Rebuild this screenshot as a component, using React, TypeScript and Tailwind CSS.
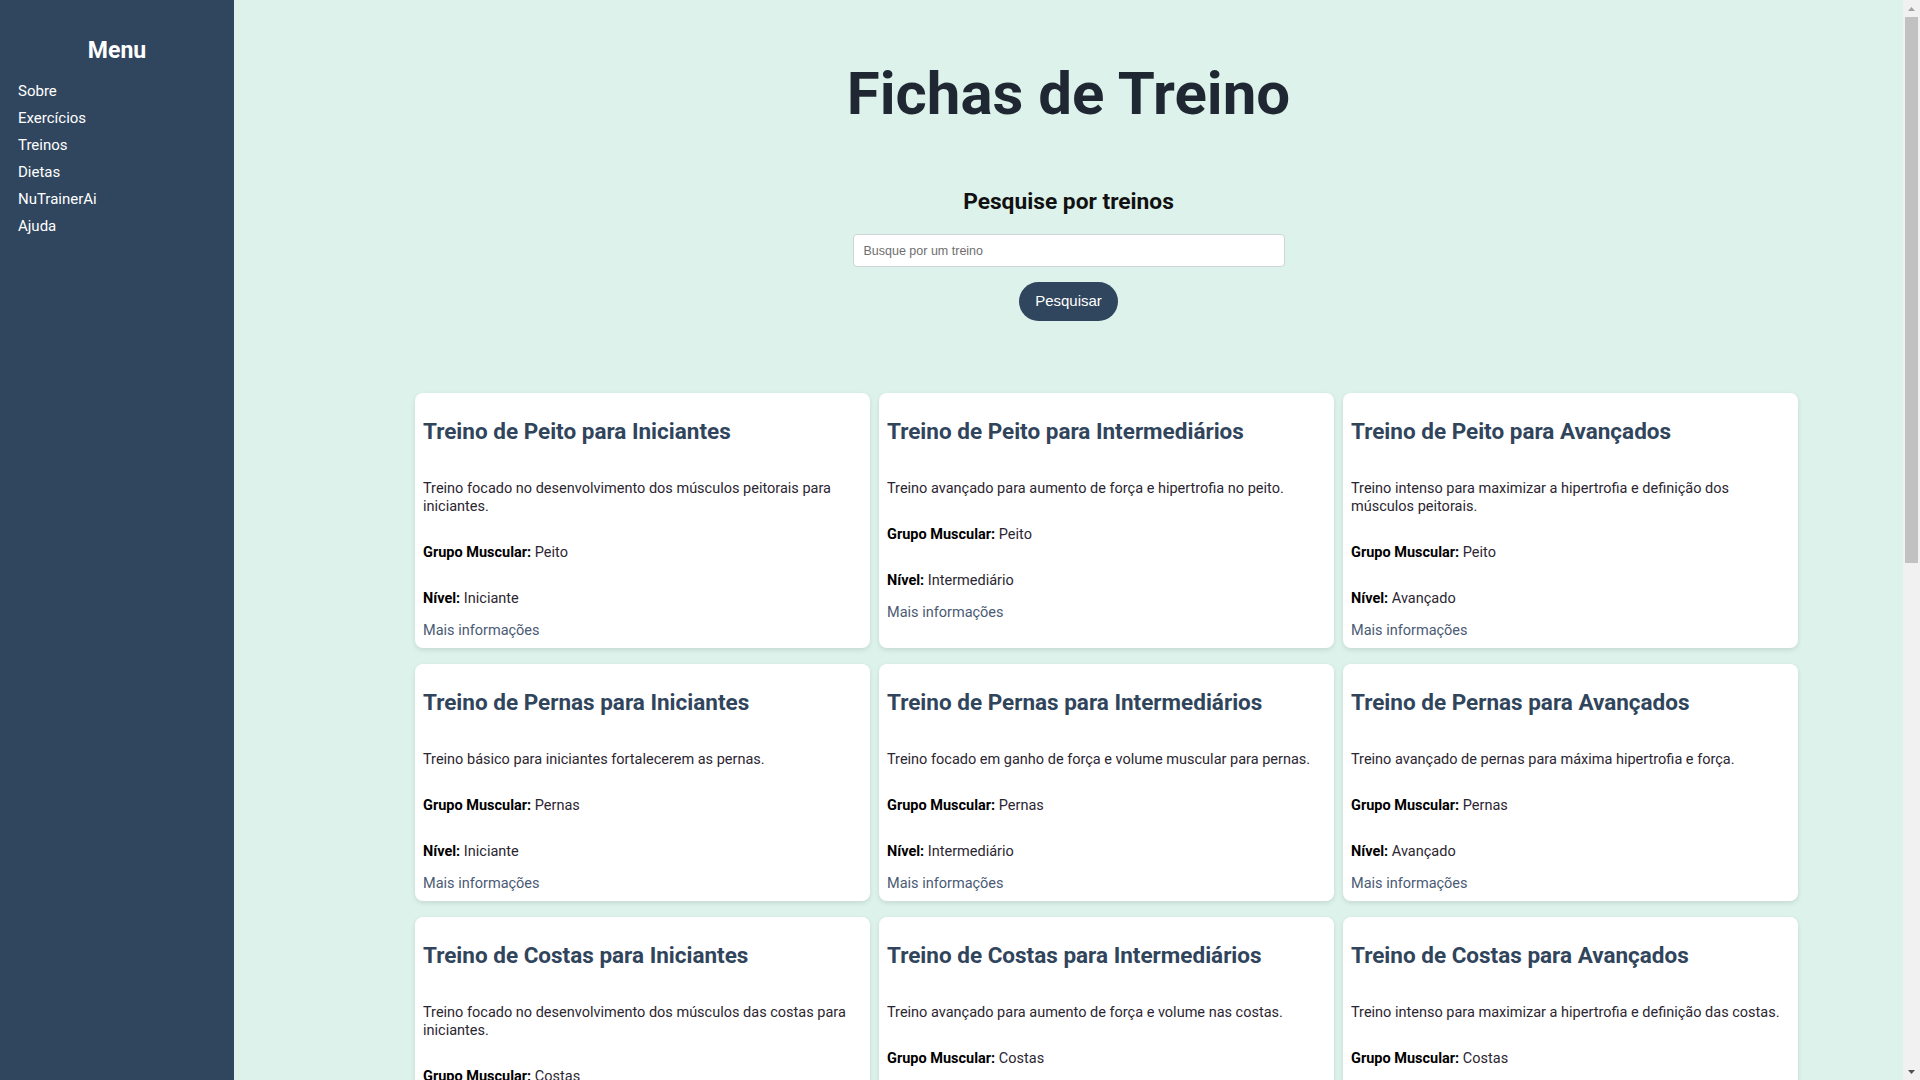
import React from "react";

type Treino = { titulo: string; descricao: string; grupo: string; nivel: string };

const grupos: { nome: string; grupo: string; desc: [string, string, string] }[] = [
  {
    nome: "Peito",
    grupo: "Peito",
    desc: [
      "Treino focado no desenvolvimento dos músculos peitorais para iniciantes.",
      "Treino avançado para aumento de força e hipertrofia no peito.",
      "Treino intenso para maximizar a hipertrofia e definição dos músculos peitorais.",
    ],
  },
  {
    nome: "Pernas",
    grupo: "Pernas",
    desc: [
      "Treino básico para iniciantes fortalecerem as pernas.",
      "Treino focado em ganho de força e volume muscular para pernas.",
      "Treino avançado de pernas para máxima hipertrofia e força.",
    ],
  },
  {
    nome: "Costas",
    grupo: "Costas",
    desc: [
      "Treino focado no desenvolvimento dos músculos das costas para iniciantes.",
      "Treino avançado para aumento de força e volume nas costas.",
      "Treino intenso para maximizar a hipertrofia e definição das costas.",
    ],
  },
  {
    nome: "Ombros",
    grupo: "Ombros",
    desc: [
      "Treino básico para fortalecer e estabilizar os ombros.",
      "Treino para aumento de força e volume dos deltoides.",
      "Treino intenso para máxima hipertrofia dos ombros.",
    ],
  },
  {
    nome: "Braços",
    grupo: "Braços",
    desc: [
      "Treino introdutório para bíceps e tríceps.",
      "Treino para ganho de força e volume nos braços.",
      "Treino avançado para hipertrofia máxima dos braços.",
    ],
  },
  {
    nome: "Abdômen",
    grupo: "Abdômen",
    desc: [
      "Treino básico para fortalecer o core e o abdômen.",
      "Treino para definição e resistência abdominal.",
      "Treino intenso para máxima definição do abdômen.",
    ],
  },
];

const niveis = [
  { titulo: "Iniciantes", nivel: "Iniciante" },
  { titulo: "Intermediários", nivel: "Intermediário" },
  { titulo: "Avançados", nivel: "Avançado" },
];

const treinos: Treino[] = grupos.flatMap((g) =>
  niveis.map((n, i) => ({
    titulo: `Treino de ${g.nome} para ${n.titulo}`,
    descricao: g.desc[i],
    grupo: g.grupo,
    nivel: n.nivel,
  }))
);

const menu = ["Sobre", "Exercícios", "Treinos", "Dietas", "NuTrainerAi", "Ajuda"];

function Card({ t }: { t: Treino }) {
  return (
    <div className="flex flex-col rounded-lg bg-white p-2 shadow-[0_2px_5px_rgba(0,0,0,0.1)]">
      <h3 className="mt-4 mb-[21px] text-[22.5px] leading-[28px] font-bold text-[#30455c]">{t.titulo}</h3>
      <p className="my-[14px] text-[14.5px] leading-[18px] text-[#2b2631]">{t.descricao}</p>
      <p className="my-[14px] text-[14.5px] leading-[18px] text-[#2b2631]">
        <strong className="font-bold text-black">Grupo Muscular:</strong> {t.grupo}
      </p>
      <p className="my-[14px] text-[14.5px] leading-[18px] text-[#2b2631]">
        <strong className="font-bold text-black">Nível:</strong> {t.nivel}
      </p>
      <a href="#" className="text-[14.5px] leading-[18px] text-[#4a5a74]">
        Mais informações
      </a>
    </div>
  );
}

function FakeScrollbar() {
  return (
    <div className="sticky top-0 flex h-screen w-[17px] shrink-0 flex-col items-center bg-[#f1f1f1]">
      <div className="flex h-[17px] w-full items-center justify-center">
        <svg width="7" height="4" viewBox="0 0 7 4">
          <polygon points="3.5,0 7,4 0,4" fill="#a3a3a3" />
        </svg>
      </div>
      <div className="h-[546px] w-[13px] bg-[#c1c1c1]" />
      <div className="flex-1" />
      <div className="flex h-[17px] w-full items-center justify-center">
        <svg width="7" height="4" viewBox="0 0 7 4">
          <polygon points="0,0 7,0 3.5,4" fill="#505050" />
        </svg>
      </div>
    </div>
  );
}

export default function App() {
  return (
    <div className="flex min-h-screen bg-[#dcf2ea] font-['Roboto',sans-serif]">
      <aside className="sticky top-0 h-screen w-[234px] shrink-0 bg-[#30465e] pt-[36px] text-white">
        <h2 className="text-center text-[23px] leading-[30px] font-bold">Menu</h2>
        <nav className="mt-[16px] flex flex-col gap-[9px] pl-[18px]">
          {menu.map((m) => (
            <a key={m} href="#" className="text-[15px] leading-[18px] text-white">
              {m}
            </a>
          ))}
        </nav>
      </aside>
      <main className="flex-1 pb-[70px]">
        <header className="flex flex-col items-center pt-[60px]">
          <h1 className="text-[60px] leading-[68px] font-bold text-[#1f2832]">Fichas de Treino</h1>
          <h2 className="mt-[60px] text-[22.75px] leading-[28px] font-bold text-[#111]">Pesquise por treinos</h2>
          <input
            type="text"
            placeholder="Busque por um treino"
            className="mt-[18px] h-[33px] w-[432px] rounded-[4px] border border-[#cfd4d8] bg-white px-[10px] font-['Liberation_Sans',sans-serif] text-[12.5px] text-[#333] placeholder:text-[#6f6f6f] outline-none"
          />
          <button className="mt-[15px] h-[39px] w-[99px] rounded-full bg-[#30465e] font-['Liberation_Sans',sans-serif] text-[15px] text-white">
            Pesquisar
          </button>
        </header>
        <section className="mt-[72px] ml-[181px] grid w-[1383px] grid-cols-3 gap-x-[9px] gap-y-4">
          {treinos.map((t) => (
            <Card key={t.titulo} t={t} />
          ))}
        </section>
      </main>
      <FakeScrollbar />
    </div>
  );
}
